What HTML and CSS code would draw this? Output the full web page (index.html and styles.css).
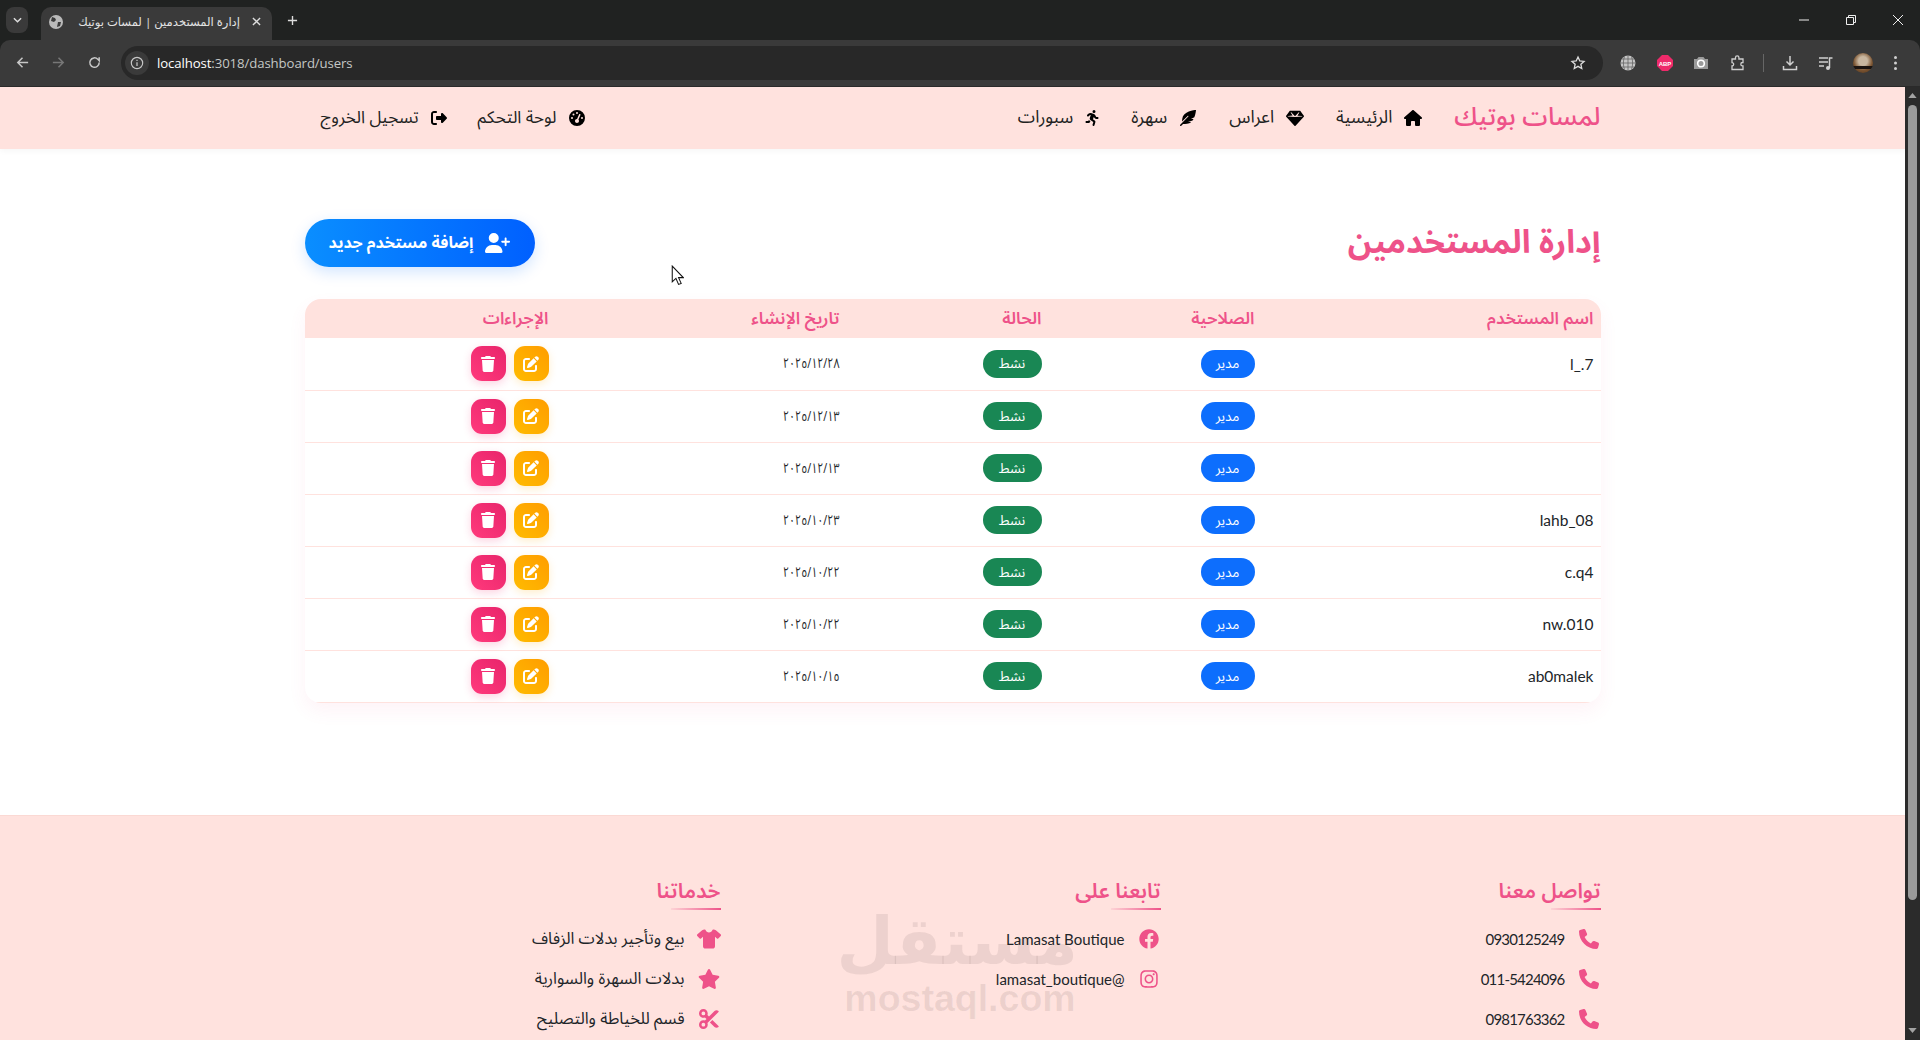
FILE: index.html
```html
<!DOCTYPE html>
<html lang="ar">
<head>
<meta charset="utf-8">
<title>إدارة المستخدمين | لمسات بوتيك</title>
<link rel="stylesheet" href="styles.css">
</head>
<body>
<svg class="defs" aria-hidden="true">
  <symbol id="i-home" viewBox="0 0 576 512"><path d="M575.8 255.5c0 18-15 32.1-32 32.1h-32l.7 160.2c0 2.7-.2 5.4-.5 8.1V472c0 22.1-17.9 40-40 40H456c-1.1 0-2.2 0-3.3-.1c-1.4 .1-2.8 .1-4.2 .1H416 392c-22.1 0-40-17.9-40-40V448 384c0-17.7-14.3-32-32-32H256c-17.7 0-32 14.3-32 32v64 24c0 22.1-17.900 40-40 40H160 128.100c-1.500 0-3-.1-4.500-.2c-1.200 .1-2.400 .2-3.600 .2H104c-22.100 0-40-17.900-40-40V360c0-.9 0-1.900 .1-2.800V287.600H32c-18 0-32-14-32-32.100c0-9 3-17 10-24L266.400 8c7-7 15-8 22-8s15 2 21 7L564.800 231.500c8 7 12 15 11 24z"/></symbol>
  <symbol id="i-gem" viewBox="0 0 576 512"><path d="M116.700 33.800c4.500-6.100 11.700-9.800 19.300-9.800H440c7.600 0 14.800 3.600 19.300 9.800l112 152c6.800 9.200 6.100 21.900-1.500 30.400l-264 288c-4.500 5-11 7.800-17.700 7.800s-13.200-2.800-17.700-7.800l-264-288c-7.700-8.500-8.300-21.200-1.500-30.400l112-152zm38.500 39.800c-3.300 2.500-4.200 7-2.100 10.500l57.400 95.600L63.300 192c-4.100 .3-7.300 3.800-7.300 8s3.200 7.700 7.300 8l224 16c.4 0 .8 0 1.100 0l224-16c4.200-.3 7.400-3.800 7.400-8s-3.200-7.700-7.300-8L365.400 180.100l57.400-95.600c2.100-3.500 1.200-8-2.100-10.500s-7.900-2.200-10.600 .6L288 200.400 166 74.500c-2.700-2.800-7.300-3.100-10.600-.6z"/></symbol>
  <symbol id="i-feather" viewBox="0 0 512 512"><path d="M512 0C460.220 3.560 96.440 38.200 71.010 287.610c-3.090 26.660-4.840 53.440-5.990 80.240l178.870-178.690c6.250-6.250 16.400-6.250 22.650 0s6.250 16.380 0 22.630L7.040 471.030c-9.380 9.370-9.380 24.570 0 33.940 9.380 9.370 24.590 9.370 33.980 0l57.130-57.070c42.090-.14 84.150-2.530 125.960-7.360 53.480-5.440 97.020-26.470 132.580-56.540H255.740l146.790-48.880c11.250-14.890 21.370-30.710 30.450-47.120h-81.140l106.540-53.210C500.290 132.860 510.190 26.260 512 0z"/></symbol>
  <symbol id="i-run" viewBox="0 0 416 512"><path d="M320 48a48 48 0 1 0 -96 0 48 48 0 1 0 96 0zM125.700 175.500c9.900-9.900 23.400-15.500 37.500-15.500c1.900 0 3.800 .1 5.600 .3L137.600 254c-9.300 28 1.700 58.800 26.800 74.500l86.200 53.900-25.400 88.800c-4.900 17 5 34.700 22 39.600s34.700-5 39.600-22l28.700-100.400c5.900-20.600-2.600-42.600-20.700-53.900L238 299l30.900-82.400 5.100 12.300C289 264.700 323.900 288 362.700 288H384c17.700 0 32-14.300 32-32s-14.300-32-32-32H362.700c-12.900 0-24.600-7.800-29.500-19.700l-6.300-15c-14.600-35.100-44.100-61.900-80.500-73.100l-48.700-15c-11.100-3.400-22.700-5.200-34.400-5.200c-31 0-60.800 12.300-82.700 34.300L57.400 153.400c-12.500 12.500-12.500 32.800 0 45.300s32.800 12.500 45.300 0l23.100-23.100zM91.200 352H32c-17.700 0-32 14.300-32 32s14.300 32 32 32h69.600c19 0 36.200-11.200 43.900-28.500L157 361.600l-9.500-6c-17.500-10.900-30.500-26.800-37.900-44.900L91.200 352z"/></symbol>
  <symbol id="i-gauge" viewBox="0 0 512 512"><path d="M0 256a256 256 0 1 1 512 0A256 256 0 1 1 0 256zM288 96a32 32 0 1 0 -64 0 32 32 0 1 0 64 0zM256 416c35.300 0 64-28.700 64-64c0-17.400-6.900-33.100-18.100-44.600L366 161.700c5.300-12.100-.2-26.300-12.300-31.600s-26.300 .2-31.600 12.300L257.900 288c-.6 0-1.300 0-1.900 0c-35.300 0-64 28.700-64 64s28.700 64 64 64zM176 144a32 32 0 1 0 -64 0 32 32 0 1 0 64 0zM96 288a32 32 0 1 0 0-64 32 32 0 1 0 0 64zm352-32a32 32 0 1 0 -64 0 32 32 0 1 0 64 0z"/></symbol>
  <symbol id="i-signout" viewBox="0 0 512 512"><path d="M377.900 105.900L500.700 228.700c7.200 7.200 11.300 17.100 11.300 27.300s-4.100 20.100-11.300 27.300L377.900 406.100c-6.400 6.400-15 9.900-24 9.900c-18.700 0-33.900-15.200-33.900-33.900l0-62.100-128 0c-17.700 0-32-14.300-32-32l0-64c0-17.700 14.300-32 32-32l128 0 0-62.100c0-18.700 15.200-33.900 33.900-33.900c9 0 17.600 3.600 24 9.900zM160 96L96 96c-17.700 0-32 14.300-32 32l0 256c0 17.700 14.300 32 32 32l64 0c17.700 0 32 14.300 32 32s-14.300 32-32 32l-64 0c-53 0-96-43-96-96L0 128C0 75 43 32 96 32l64 0c17.700 0 32 14.300 32 32s-14.300 32-32 32z"/></symbol>
  <symbol id="i-userplus" viewBox="0 0 640 512"><path d="M96 128a128 128 0 1 1 256 0A128 128 0 1 1 96 128zM0 482.300C0 383.800 79.800 304 178.300 304h91.400C368.200 304 448 383.800 448 482.300c0 16.400-13.300 29.700-29.700 29.700H29.700C13.300 512 0 498.700 0 482.300zM504 312V248H440c-13.300 0-24-10.700-24-24s10.700-24 24-24h64V136c0-13.300 10.700-24 24-24s24 10.700 24 24v64h64c13.300 0 24 10.700 24 24s-10.700 24-24 24H552v64c0 13.300-10.700 24-24 24s-24-10.700-24-24z"/></symbol>
  <symbol id="i-trash" viewBox="0 0 448 512"><path d="M135.200 17.700L128 32H32C14.300 32 0 46.300 0 64S14.300 96 32 96H416c17.700 0 32-14.300 32-32s-14.300-32-32-32H320l-7.200-14.300C307.400 6.800 296.300 0 284.200 0H163.800c-12.100 0-23.200 6.800-28.600 17.700zM416 128H32L53.200 467c1.600 25.300 22.600 45 47.900 45H346.900c25.300 0 46.300-19.700 47.900-45L416 128z"/></symbol>
  <symbol id="i-edit" viewBox="0 0 512 512"><path d="M471.600 21.700c-21.900-21.900-57.300-21.900-79.200 0L362.300 51.700l97.900 97.900 30.100-30.100c21.900-21.900 21.900-57.300 0-79.200L471.600 21.700zm-299.200 220c-6.100 6.100-10.800 13.600-13.500 21.900l-29.600 88.800c-2.900 8.600-.6 18.100 5.800 24.600s15.900 8.700 24.600 5.800l88.800-29.600c8.200-2.700 15.700-7.400 21.900-13.500L437.700 172.300 339.700 74.300 172.400 241.700zM96 64C43 64 0 107 0 160V416c0 53 43 96 96 96H352c53 0 96-43 96-96V320c0-17.700-14.300-32-32-32s-32 14.300-32 32v96c0 17.700-14.300 32-32 32H96c-17.700 0-32-14.300-32-32V160c0-17.700 14.300-32 32-32h96c17.700 0 32-14.300 32-32s-14.300-32-32-32H96z"/></symbol>
  <symbol id="i-phone" viewBox="0 0 512 512"><path d="M164.900 24.600c-7.700-18.600-28-28.500-47.400-23.200l-88 24C12.100 30.200 0 46 0 64C0 311.400 200.600 512 448 512c18 0 33.800-12.100 38.600-29.500l24-88c5.300-19.400-4.600-39.700-23.200-47.400l-96-40c-16.300-6.800-35.200-2.100-46.300 11.600L304.700 368C234.300 334.700 177.300 277.700 144 207.300L193.300 167c13.700-11.200 18.400-30 11.600-46.300l-40-96z"/></symbol>
  <symbol id="i-facebook" viewBox="0 0 512 512"><path d="M504 256C504 119 393 8 256 8S8 119 8 256c0 123.780 90.690 226.380 209.250 245V327.690h-63V256h63v-54.640c0-62.150 37-96.480 93.670-96.480 27.140 0 55.520 4.840 55.520 4.840v61h-31.280c-30.800 0-40.410 19.120-40.410 38.730V256h68.780l-11 71.690h-57.780V501C413.310 482.380 504 379.780 504 256z"/></symbol>
  <symbol id="i-instagram" viewBox="0 0 448 512"><path d="M224.100 141c-63.600 0-114.900 51.300-114.900 114.900s51.300 114.900 114.900 114.900S339 319.500 339 255.900 287.700 141 224.100 141zm0 189.600c-41.100 0-74.700-33.500-74.700-74.700s33.500-74.700 74.700-74.700 74.700 33.500 74.700 74.700-33.600 74.700-74.700 74.700zm146.400-194.300c0 14.900-12 26.800-26.800 26.800-14.900 0-26.800-12-26.800-26.800s12-26.800 26.800-26.800 26.800 12 26.800 26.800zm76.100 27.200c-1.700-35.900-9.900-67.700-36.200-93.900-26.200-26.200-58-34.400-93.900-36.200-37-2.100-147.900-2.100-184.900 0-35.800 1.700-67.600 9.900-93.900 36.100s-34.400 58-36.200 93.900c-2.100 37-2.100 147.900 0 184.900 1.700 35.900 9.900 67.700 36.200 93.900s58 34.400 93.900 36.200c37 2.100 147.900 2.100 184.900 0 35.900-1.700 67.700-9.900 93.900-36.200 26.200-26.200 34.400-58 36.200-93.900 2.100-37 2.100-147.800 0-184.800zM398.800 388c-7.800 19.600-22.900 34.700-42.600 42.600-29.500 11.700-99.500 9-132.100 9s-102.700 2.600-132.100-9c-19.600-7.800-34.700-22.900-42.600-42.600-11.700-29.500-9-99.500-9-132.100s-2.600-102.700 9-132.100c7.800-19.600 22.900-34.700 42.600-42.600 29.500-11.700 99.500-9 132.100-9s102.700-2.600 132.100 9c19.600 7.800 34.700 22.900 42.600 42.600 11.700 29.500 9 99.500 9 132.100s2.700 102.700-9 132.100z"/></symbol>
  <symbol id="i-star" viewBox="0 0 576 512"><path d="M316.900 18C311.600 7 300.400 0 288.100 0s-23.400 7-28.800 18L195 150.300 51.400 171.500c-12 1.800-22 10.200-25.700 21.700s-.7 24.200 7.900 32.700L137.800 329 113.200 474.700c-2 12 3 24.200 12.900 31.300s23 8 33.800 2.300l128.300-68.500 128.300 68.500c10.800 5.700 23.900 4.900 33.800-2.300s14.900-19.300 12.900-31.300L438.500 329 542.700 225.900c8.600-8.500 11.700-21.200 7.900-32.700s-13.700-19.900-25.700-21.700L381.200 150.300 316.900 18z"/></symbol>
  <symbol id="i-tshirt" viewBox="0 0 640 512"><path d="M211.800 0c7.800 0 14.300 5.700 16.700 13.200C240.800 51.900 277.100 80 320 80s79.200-28.100 91.500-66.800C413.900 5.700 420.400 0 428.200 0h12.600c22.500 0 44.200 7.900 61.500 22.300L628.500 127.400c6.600 5.500 10.700 13.500 11.400 22.100s-2.100 17.100-7.800 23.600l-56 64c-11.400 13.100-31.200 14.600-44.600 3.500L480 197.700V448c0 35.300-28.700 64-64 64H224c-35.300 0-64-28.700-64-64V197.700l-51.500 42.900c-13.300 11.100-33.100 9.600-44.600-3.500l-56-64c-5.700-6.500-8.500-15-7.800-23.600s4.800-16.600 11.400-22.100L137.700 22.300C155 7.900 176.700 0 199.200 0h12.600z"/></symbol>
  <symbol id="i-cut" viewBox="0 0 512 512"><path d="M256 192l-39.500-39.500c4.900-12.600 7.500-26.200 7.500-40.500C224 50.100 173.900 0 112 0S0 50.100 0 112s50.100 112 112 112c14.300 0 27.900-2.700 40.500-7.500L192 256l-39.500 39.500c-12.600-4.900-26.200-7.500-40.500-7.500C50.100 288 0 338.100 0 400s50.100 112 112 112s112-50.100 112-112c0-14.300-2.700-27.900-7.500-40.500L499.200 76.800c7.100-7.100 7.100-18.500 0-25.600c-28.300-28.300-74.100-28.300-102.400 0L256 192zm22.600 150.600L396.800 460.800c28.300 28.300 74.100 28.300 102.400 0c7.100-7.100 7.100-18.500 0-25.600L342.600 278.600l-64 64zM64 112a48 48 0 1 1 96 0 48 48 0 1 1 -96 0zm48 240a48 48 0 1 1 0 96 48 48 0 1 1 0-96z"/></symbol>
</svg>

<div class="browser">
  <div class="tabstrip">
    <div class="tab-list-btn"><svg class="tab-chevron" viewBox="0 0 10 6"><path d="M1 1l4 4 4-4" fill="none" stroke="currentColor" stroke-width="1.6"/></svg></div>
    <div class="tab" dir="rtl">
      <svg class="tab-close" viewBox="0 0 10 10"><path d="M1 1l8 8M9 1l-8 8" stroke="currentColor" stroke-width="1.5"/></svg>
      <span class="tab-title">إدارة المستخدمين | لمسات بوتيك</span>
      <svg class="tab-globe" viewBox="0 0 14 14"><circle cx="7" cy="7" r="7" fill="#b9b9b9"/><path d="M3 2l3 1 1 2-2 2-3-1zM9 7l3 0-1 4-3 1z" fill="#3a3a3a"/></svg>
    </div>
    <svg class="new-tab" viewBox="0 0 12 12"><path d="M6 1v10M1 6h10" stroke="currentColor" stroke-width="1.5"/></svg>
    <div class="win-controls">
      <svg class="win-icon" viewBox="0 0 12 12"><path d="M1 6h10" stroke="currentColor"/></svg>
      <svg class="win-icon" viewBox="0 0 12 12"><path d="M1.5 3.5h7v7h-7zM3.5 3.5v-2h7v7h-2" fill="none" stroke="currentColor"/></svg>
      <svg class="win-icon" viewBox="0 0 12 12"><path d="M1 1l10 10M11 1L1 11" stroke="currentColor"/></svg>
    </div>
  </div>
  <div class="toolbar">
    <svg class="tb-icon tb-back" viewBox="0 0 16 16"><path d="M14 8H3M8 3L3 8l5 5" fill="none" stroke="currentColor" stroke-width="1.6"/></svg>
    <svg class="tb-icon tb-forward" viewBox="0 0 16 16"><path d="M2 8h11M8 3l5 5-5 5" fill="none" stroke="currentColor" stroke-width="1.6"/></svg>
    <svg class="tb-icon tb-reload" viewBox="0 0 16 16"><path d="M13 8a5 5 0 1 1-1.500-3.500L13 6V2.500" fill="none" stroke="currentColor" stroke-width="1.6"/></svg>
    <div class="omnibox">
      <div class="site-info"><svg class="site-info-icon" viewBox="0 0 16 16"><circle cx="8" cy="8" r="6.500" fill="none" stroke="currentColor" stroke-width="1.300"/><path d="M8 7v4.500M8 4.200v1.500" stroke="currentColor" stroke-width="1.400"/></svg></div>
      <span class="url"><span class="url-host">localhost</span>:3018/dashboard/users</span>
      <svg class="bookmark" viewBox="0 0 24 24"><path d="M12 3l2.700 5.900 6.300.7-4.700 4.300 1.300 6.300L12 17l-5.600 3.200 1.300-6.300L3 9.600l6.300-.7z" fill="none" stroke="currentColor" stroke-width="2"/></svg>
    </div>
    <div class="extensions">
      <svg class="ext" viewBox="0 0 16 16"><circle cx="8" cy="8" r="7.500" fill="#c4c4c4"/><path d="M8 .5v15M.5 8h15M2 4h12M2 12h12M4.500 1.500c-1.500 4-1.500 9 0 13M11.500 1.500c1.500 4 1.500 9 0 13" stroke="#5a5a5a" stroke-width=".7" fill="none"/></svg>
      <svg class="ext" viewBox="0 0 16 16"><path d="M5 0h6l5 5v6l-5 5H5l-5-5V5z" fill="#ee2a6a"/><text x="8" y="10.500" class="abp-text">ABP</text></svg>
      <svg class="ext" viewBox="0 0 16 16"><path d="M1 4h3l1.500-2h5L12 4h3v10H1z" fill="#9a9a9a"/><circle cx="8" cy="8.500" r="3.300" fill="none" stroke="#fff" stroke-width="1.600"/></svg>
      <svg class="ext" viewBox="0 0 16 16"><path d="M2 4h3.500V2.500a1.700 1.700 0 0 1 3.400 0V4H13v3.500h-.5a1.700 1.700 0 0 0 0 3.400h.5V14.500H2V11a1.700 1.700 0 0 0 0-3.400z" fill="none" stroke="#cfcfcf" stroke-width="1.300"/></svg>
      <span class="tb-divider"></span>
      <svg class="ext" viewBox="0 0 16 16"><path d="M8 1v9M4.500 6.500L8 10l3.500-3.500M1.500 11v3.500h13V11" fill="none" stroke="#d0d0d0" stroke-width="1.500"/></svg>
      <svg class="ext" viewBox="0 0 16 16"><path d="M1 3h9M1 7h9M1 11h5" stroke="#d0d0d0" stroke-width="1.500"/><path d="M11.500 13V3h3" fill="none" stroke="#d0d0d0" stroke-width="1.500"/><circle cx="10" cy="13" r="2" fill="#d0d0d0"/></svg>
      <span class="avatar"></span>
      <svg class="ext-menu" viewBox="0 0 4 16"><circle cx="2" cy="2.500" r="1.500" fill="#d0d0d0"/><circle cx="2" cy="8" r="1.500" fill="#d0d0d0"/><circle cx="2" cy="13.500" r="1.500" fill="#d0d0d0"/></svg>
    </div>
  </div>
</div>

<div class="viewport">
  <div class="page" dir="rtl">
    <nav class="navbar">
      <div class="nav-inner">
        <a class="brand">لمسات بوتيك</a>
        <ul class="nav-links">
          <li class="nav-item"><svg class="nav-icon"><use href="#i-home"/></svg>الرئيسية</li>
          <li class="nav-item"><svg class="nav-icon"><use href="#i-gem"/></svg>اعراس</li>
          <li class="nav-item"><svg class="nav-icon"><use href="#i-feather"/></svg>سهرة</li>
          <li class="nav-item"><svg class="nav-icon nav-icon-run"><use href="#i-run"/></svg>سبورات</li>
        </ul>
        <ul class="nav-links nav-end">
          <li class="nav-item"><svg class="nav-icon nav-icon-sq"><use href="#i-gauge"/></svg>لوحة التحكم</li>
          <li class="nav-item"><svg class="nav-icon nav-icon-sq"><use href="#i-signout"/></svg>تسجيل الخروج</li>
        </ul>
      </div>
    </nav>

    <main class="content">
      <div class="page-head">
        <h1 class="page-title">إدارة المستخدمين</h1>
        <button class="add-btn"><svg class="add-icon"><use href="#i-userplus"/></svg>إضافة مستخدم جديد</button>
      </div>
      <div class="table-card">
        <table class="users">
          <colgroup><col class="c-name"><col class="c-role"><col class="c-status"><col class="c-date"><col class="c-actions"></colgroup>
          <thead>
            <tr><th>اسم المستخدم</th><th>الصلاحية</th><th>الحالة</th><th>تاريخ الإنشاء</th><th>الإجراءات</th></tr>
          </thead>
          <tbody>
            <tr><td class="uname">l_.7</td><td><span class="pill pill-role">مدير</span></td><td><span class="pill pill-status">نشط</span></td><td><span class="date">٢٠٢٥/١٢/٢٨</span></td><td><div class="actions"><button class="act act-edit"><svg class="act-icon"><use href="#i-edit"/></svg></button><button class="act act-del"><svg class="act-icon act-icon-del"><use href="#i-trash"/></svg></button></div></td></tr>
            <tr><td class="uname"></td><td><span class="pill pill-role">مدير</span></td><td><span class="pill pill-status">نشط</span></td><td><span class="date">٢٠٢٥/١٢/١٣</span></td><td><div class="actions"><button class="act act-edit"><svg class="act-icon"><use href="#i-edit"/></svg></button><button class="act act-del"><svg class="act-icon act-icon-del"><use href="#i-trash"/></svg></button></div></td></tr>
            <tr><td class="uname"></td><td><span class="pill pill-role">مدير</span></td><td><span class="pill pill-status">نشط</span></td><td><span class="date">٢٠٢٥/١٢/١٣</span></td><td><div class="actions"><button class="act act-edit"><svg class="act-icon"><use href="#i-edit"/></svg></button><button class="act act-del"><svg class="act-icon act-icon-del"><use href="#i-trash"/></svg></button></div></td></tr>
            <tr><td class="uname">lahb_08</td><td><span class="pill pill-role">مدير</span></td><td><span class="pill pill-status">نشط</span></td><td><span class="date">٢٠٢٥/١٠/٢٣</span></td><td><div class="actions"><button class="act act-edit"><svg class="act-icon"><use href="#i-edit"/></svg></button><button class="act act-del"><svg class="act-icon act-icon-del"><use href="#i-trash"/></svg></button></div></td></tr>
            <tr><td class="uname">c.q4</td><td><span class="pill pill-role">مدير</span></td><td><span class="pill pill-status">نشط</span></td><td><span class="date">٢٠٢٥/١٠/٢٢</span></td><td><div class="actions"><button class="act act-edit"><svg class="act-icon"><use href="#i-edit"/></svg></button><button class="act act-del"><svg class="act-icon act-icon-del"><use href="#i-trash"/></svg></button></div></td></tr>
            <tr><td class="uname">nw.010</td><td><span class="pill pill-role">مدير</span></td><td><span class="pill pill-status">نشط</span></td><td><span class="date">٢٠٢٥/١٠/٢٢</span></td><td><div class="actions"><button class="act act-edit"><svg class="act-icon"><use href="#i-edit"/></svg></button><button class="act act-del"><svg class="act-icon act-icon-del"><use href="#i-trash"/></svg></button></div></td></tr>
            <tr><td class="uname">ab0malek</td><td><span class="pill pill-role">مدير</span></td><td><span class="pill pill-status">نشط</span></td><td><span class="date">٢٠٢٥/١٠/١٥</span></td><td><div class="actions"><button class="act act-edit"><svg class="act-icon"><use href="#i-edit"/></svg></button><button class="act act-del"><svg class="act-icon act-icon-del"><use href="#i-trash"/></svg></button></div></td></tr>
          </tbody>
        </table>
      </div>
    </main>

    <footer class="footer">
      <div class="footer-grid">
        <section class="f-col">
          <h3 class="f-title">تواصل معنا</h3>
          <ul class="f-list">
            <li class="f-item"><svg class="f-icon"><use href="#i-phone"/></svg><span class="f-phone">0930125249</span></li>
            <li class="f-item"><svg class="f-icon"><use href="#i-phone"/></svg><span class="f-phone">011-5424096</span></li>
            <li class="f-item"><svg class="f-icon"><use href="#i-phone"/></svg><span class="f-phone">0981763362</span></li>
          </ul>
        </section>
        <section class="f-col">
          <h3 class="f-title">تابعنا على</h3>
          <ul class="f-list">
            <li class="f-item"><svg class="f-icon"><use href="#i-facebook"/></svg><span class="f-latin">Lamasat Boutique</span></li>
            <li class="f-item"><svg class="f-icon"><use href="#i-instagram"/></svg><span class="f-latin">@lamasat_boutique</span></li>
          </ul>
        </section>
        <section class="f-col">
          <h3 class="f-title">خدماتنا</h3>
          <ul class="f-list">
            <li class="f-item"><svg class="f-icon"><use href="#i-tshirt"/></svg><span>بيع وتأجير بدلات الزفاف</span></li>
            <li class="f-item"><svg class="f-icon"><use href="#i-star"/></svg><span>بدلات السهرة والسوارية</span></li>
            <li class="f-item"><svg class="f-icon"><use href="#i-cut"/></svg><span>قسم للخياطة والتصليح</span></li>
          </ul>
        </section>
      </div>
    </footer>

    <div class="watermark"><div class="wm-ar">مستقل</div><div class="wm-en">mostaql.com</div></div>
    <svg class="cursor" viewBox="0 0 12 20"><path d="M1 1v15l3.500-3.300L7 18.500l2.500-1L7 12h4.500z" fill="#fff" stroke="#111" stroke-width="1"/></svg>
  </div>
  <div class="scrollbar">
    <svg class="sb-arrow" viewBox="0 0 10 6"><path d="M5 0l5 6H0z" fill="currentColor"/></svg>
    <div class="sb-thumb"></div>
    <svg class="sb-arrow sb-arrow-down" viewBox="0 0 10 6"><path d="M5 6l5-6H0z" fill="currentColor"/></svg>
  </div>
</div>
</body>
</html>
```

FILE: styles.css
```css
* { box-sizing: border-box; }
html, body { margin: 0; padding: 0; height: 100%; overflow: hidden; }
body {
  font-family: "Noto Sans Arabic", "DejaVu Sans", sans-serif;
  background: #fff;
  color: #212529;
  display: flex;
  flex-direction: column;
}
.defs { width: 0; height: 0; position: absolute; }
ul { list-style: none; margin: 0; padding: 0; }
svg use { fill: currentColor; }

/* browser chrome */
.browser { flex: none; height: 87px; background: #202221; color: #c7c7c7; font-family: "Open Sans", "DejaVu Sans", sans-serif; }
.tabstrip { height: 40px; display: flex; align-items: flex-start; padding: 7px 0 0 6px; }
.tab-list-btn { width: 22px; height: 26px; background: #3a3a3a; border-radius: 8px; display: flex; align-items: center; justify-content: center; margin-right: 13px; }
.tab-chevron { width: 9px; height: 6px; color: #ddd; }
.tab { width: 231px; height: 33px; background: #3a3a3a; border-radius: 10px 10px 0 0; display: flex; align-items: center; padding: 0 11px 4px 8px; gap: 12px; color: #e3e3e3; }
.tab-close { width: 9px; height: 9px; flex: none; color: #ddd; }
.tab-title { font-size: 11.6px; line-height: 20px; white-space: nowrap; flex: 1; overflow: hidden; }
.tab-globe { width: 14px; height: 14px; flex: none; }
.new-tab { width: 11px; height: 11px; margin: 8px 0 0 15px; color: #ddd; }
.win-controls { margin-left: auto; display: flex; gap: 35px; padding: 7px 16px 0 0; color: #eee; }
.win-icon { width: 12px; height: 12px; }
.toolbar { height: 47px; background: #3a3a3a; border-radius: 10px 10px 0 0; display: flex; align-items: center; padding: 0 0 1px 15px; border-bottom: 1px solid #2a2a2a; }
.tb-icon { width: 15px; height: 15px; flex: none; margin-right: 21px; color: #c7c7c7; }
.tb-forward { color: #777; }
.tb-reload { margin-right: 19px; }
.omnibox { width: 1482px; flex: none; height: 34px; background: #282828; border-radius: 17px; display: flex; align-items: center; padding: 0 17px 0 4px; color: #c7c7c7; }
.site-info { width: 24px; height: 24px; background: #3a3a3a; border-radius: 50%; display: flex; align-items: center; justify-content: center; margin-right: 8px; }
.site-info-icon { width: 14px; height: 14px; }
.url { font-size: 13.2px; color: #c4c7c5; letter-spacing: -0.1px; }
.url-host { color: #fff; }
.bookmark { width: 16px; height: 16px; margin-left: auto; color: #ddd; }
.extensions { display: flex; align-items: center; flex: none; padding-left: 17px; gap: 20.5px; }
.ext { width: 16px; height: 16px; flex: none; }
.abp-text { font: 700 6px "Liberation Sans", sans-serif; fill: #fff; text-anchor: middle; }
.tb-divider { width: 1px; height: 18px; background: #666; margin: 0 -3px 0 -3px; }
.avatar { width: 20px; height: 20px; border-radius: 50%; margin: 0 0 0 -2px; background: linear-gradient(180deg, transparent 65%, #1c1410 65% 82%, transparent 82%), radial-gradient(circle at 50% 40%, #c9b7a0 0 28%, #7a5330 60%, #4b321c 100%); }
.ext-menu { width: 5px; height: 16px; flex: none; }

/* viewport */
.viewport { flex: 1; min-height: 0; display: flex; }
.page { flex: 1; min-width: 0; position: relative; overflow: hidden; background: #fff; }
.scrollbar { width: 15px; flex: none; background: #2b2b2b; color: #a3a3a3; display: flex; flex-direction: column; align-items: center; padding: 6px 0 7px; }
.sb-arrow { width: 9px; height: 5px; flex: none; }
.sb-thumb { width: 9px; height: 795px; background: #9b9b9b; border-radius: 5px; margin-top: 7px; }
.sb-arrow-down { margin-top: auto; }

/* navbar */
.navbar { height: 62px; background: #ffe2de; box-shadow: 0 2px 6px rgba(0,0,0,.04); position: relative; }
.nav-inner { width: 1296px; margin: 0 auto; height: 100%; display: flex; align-items: center; }
.brand { font-size: 25.5px; font-weight: 500; color: #ee5289; margin-left: 32px; white-space: nowrap; line-height: 1; }
.nav-links { display: flex; align-items: center; gap: 32px; }
.nav-end { margin-right: auto; padding-left: 16px; gap: 31px; }
.nav-item { display: flex; align-items: center; gap: 12px; font-size: 17.5px; line-height: 1; color: #222; white-space: nowrap; }
.nav-end .nav-item { font-size: 17px; }
.nav-icon { width: 18px; height: 16px; color: #000; flex: none; }
.nav-icon-run { width: 14px; }
.nav-icon-sq { width: 16px; }

/* main */
.content { width: 1296px; margin: 0 auto; height: 666px; padding-top: 70px; }
.page-head { display: flex; justify-content: space-between; align-items: center; height: 48px; margin-bottom: 32px; }
.page-title { margin: 0; font-size: 32.4px; line-height: 48px; font-weight: 700; color: #ee5289; }
.add-btn { display: flex; align-items: center; gap: 12px; height: 48px; width: 230px; justify-content: center; border: 0; border-radius: 24px; color: #fff; font: 700 16px "Noto Sans Arabic", "DejaVu Sans", sans-serif; background: linear-gradient(90deg, #0a8eff, #0060ff); box-shadow: 0 5px 15px rgba(0,110,255,.18); }
.add-icon { width: 25px; height: 20px; flex: none; }
.table-card { border-radius: 16px; overflow: hidden; box-shadow: 0 8px 18px rgba(238,82,137,.07); }
.users { width: 100%; border-collapse: collapse; table-layout: fixed; }
.c-name { width: 339px; }
.c-role { width: 213px; }
.c-status { width: 202px; }
.c-date { width: 291px; }
.c-actions { width: 251px; }
.users th { height: 39px; padding: 2px 7px 0; background: #ffe2de; color: #ee5289; font-size: 17px; line-height: 1; font-weight: 600; text-align: right; }
.users td { height: 52px; padding: 0 7px; border-bottom: 1px solid #ffe2de; font-size: 13px; color: #212529; text-align: right; }
.users .uname { font-family: "Lato", "DejaVu Sans", sans-serif; font-size: 15.5px; }
.date { display: inline-block; font-size: 14px; transform: scaleX(.76); transform-origin: right center; }
.pill { display: inline-flex; align-items: center; justify-content: center; height: 28px; border-radius: 14px; color: #fff; font-size: 13.5px; line-height: 1; vertical-align: middle; }
.pill-role { width: 54px; background: #0d6efd; }
.pill-status { width: 59px; background: #198754; }
.actions { display: flex; gap: 8px; }
.act { width: 35px; height: 35px; border: 0; padding: 0; border-radius: 11px; color: #fff; display: flex; align-items: center; justify-content: center; }
.act-edit { background: linear-gradient(45deg, #ffbb00, #ff9d00); box-shadow: 0 3px 8px rgba(255,170,0,.2); }
.act-del { background: linear-gradient(45deg, #ff3a7c, #e8246b); box-shadow: 0 3px 8px rgba(240,40,110,.2); }
.act-icon { width: 16px; height: 16px; }
.act-icon-del { width: 14px; }

/* footer */
.footer { height: 400px; background: #ffe2de; border-top: 1px solid #fbd9d4; padding-top: 62px; }
.footer-grid { width: 1296px; margin: 0 auto; display: grid; grid-template-columns: repeat(3, 416px); gap: 24px; }
.f-title { position: relative; margin: 0 0 19px; height: 32px; padding-top: 1px; font-size: 21px; font-weight: 600; color: #ee5289; line-height: 24px; }
.f-title::after { content: ""; position: absolute; right: 0; bottom: 0; width: 50px; height: 2px; background: linear-gradient(270deg, #ee5289, rgba(238,82,137,.1)); }
.f-list { display: flex; flex-direction: column; gap: 20px; }
.f-item { display: flex; align-items: center; gap: 12px; height: 20px; font-size: 16.4px; line-height: 1; color: #212529; white-space: nowrap; }
.f-latin { font-family: "Lato", "DejaVu Sans", sans-serif; font-size: 15px; }
.f-phone { font-family: "Lato", "DejaVu Sans", sans-serif; font-size: 15px; letter-spacing: -.8px; direction: ltr; }
.f-icon { width: 24px; height: 20px; color: #ee5289; flex: none; }

/* overlays */
.watermark { position: absolute; left: 846px; top: 817px; width: 232px; text-align: center; color: rgba(60,40,40,.09); pointer-events: none; font-family: "Liberation Sans", sans-serif; font-weight: 700; }
.wm-ar { font-family: "DejaVu Sans", sans-serif; font-size: 66px; line-height: 76px; }
.wm-en { font-size: 37.5px; line-height: 36px; direction: ltr; margin-left: -4px; }
.cursor { position: absolute; left: 671px; top: 178px; width: 13px; height: 21px; }
```
